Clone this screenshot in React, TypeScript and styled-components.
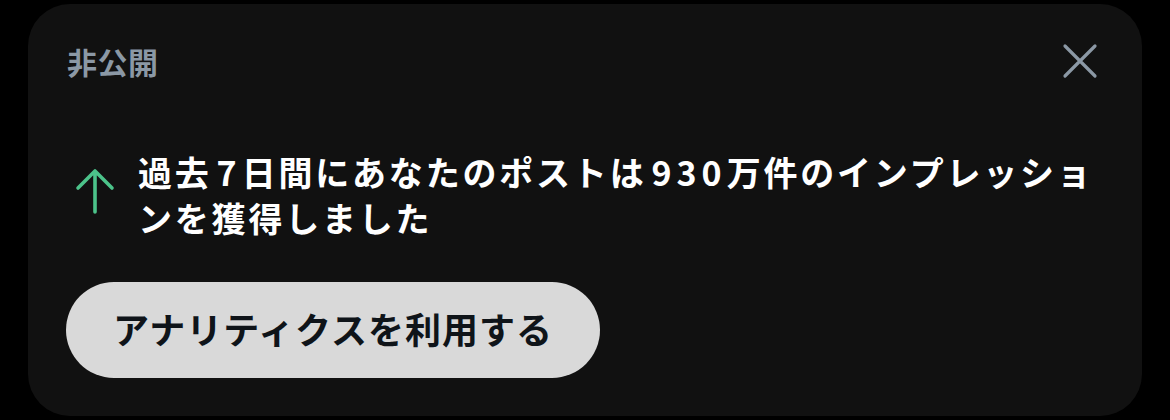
import { createGlobalStyle, styled } from "styled-components";

const GlobalStyle = createGlobalStyle`
    html, body {
        margin: 0;
        padding: 0;
        background: #000;
    }
    body {
        font-family: "Noto Sans CJK JP", "Noto Sans", sans-serif;
    }
`

const ArrowUp = () => (
    <svg width="48" height="48" viewBox="0 0 48 48" fill="none">
        <path d="M24 45V4M7 21L24 4l17 17" stroke="#4cc38a" strokeWidth="3.6" strokeLinecap="round" strokeLinejoin="round" />
    </svg>
)

const CloseIcon = () => (
    <svg width="36" height="36" viewBox="0 0 36 36" fill="none">
        <path d="M3 3l30 30M33 3L3 33" stroke="#8b98a5" strokeWidth="3.2" strokeLinecap="round" />
    </svg>
)

export default function App() {
    return (
        <>
            <GlobalStyle />
            <Page>
                <StyledCard>
                    <StyledHeader>
                        <StyledLabel>非公開</StyledLabel>
                        <StyledClose aria-label="閉じる">
                            <CloseIcon />
                        </StyledClose>
                    </StyledHeader>
                    <StyledHeadline>
                        <StyledIcon>
                            <ArrowUp />
                        </StyledIcon>
                        <StyledMessage>
                            過去<StyledNum>7</StyledNum>日間にあなたのポストは<StyledNum>930</StyledNum>万件のインプレッションを獲得しました
                        </StyledMessage>
                    </StyledHeadline>
                    <StyledButton>アナリティクスを利用する</StyledButton>
                </StyledCard>
            </Page>
        </>
    )
}

const Page = styled.div`
    width: 1170px;
    height: 420px;
    padding: 4px 28px;
    box-sizing: border-box;
`

const StyledCard = styled.section`
    height: 100%;
    box-sizing: border-box;
    background: #111111;
    border-radius: 42px;
    padding: 37px 44px 38px 38px;
    display: flex;
    flex-direction: column;
`

const StyledHeader = styled.div`
    display: flex;
    align-items: center;
    justify-content: space-between;
    height: 40px;
    padding-left: 1px;
`

const StyledLabel = styled.span`
    font-size: 30px;
    font-weight: 700;
    color: #8b98a5;
    letter-spacing: 0.5px;
`

const StyledClose = styled.button`
    display: flex;
    align-items: center;
    justify-content: center;
    background: none;
    border: none;
    padding: 0;
    width: 36px;
    height: 36px;
    cursor: pointer;
`

const StyledHeadline = styled.div`
    display: flex;
    align-items: center;
    gap: 14px;
    margin-top: 68px;
`

const StyledIcon = styled.div`
    flex: 0 0 58px;
    display: flex;
    justify-content: center;
    padding-bottom: 8px;
`

const StyledMessage = styled.p`
    margin: 0;
    width: 966px;
    font-size: 34px;
    line-height: 46px;
    font-weight: 700;
    color: #ffffff;
    letter-spacing: 2.8px;
`

const StyledNum = styled.span`
    letter-spacing: 5px;
    margin-left: 5px;
`

const StyledButton = styled.button`
    margin-top: 41px;
    align-self: flex-start;
    height: 96px;
    width: 534px;
    border: none;
    border-radius: 48px;
    background: #d9d9d9;
    color: #0f1419;
    font-family: inherit;
    font-size: 36px;
    font-weight: 700;
    letter-spacing: 1px;
    padding: 0 0 4px;
    cursor: pointer;
`
